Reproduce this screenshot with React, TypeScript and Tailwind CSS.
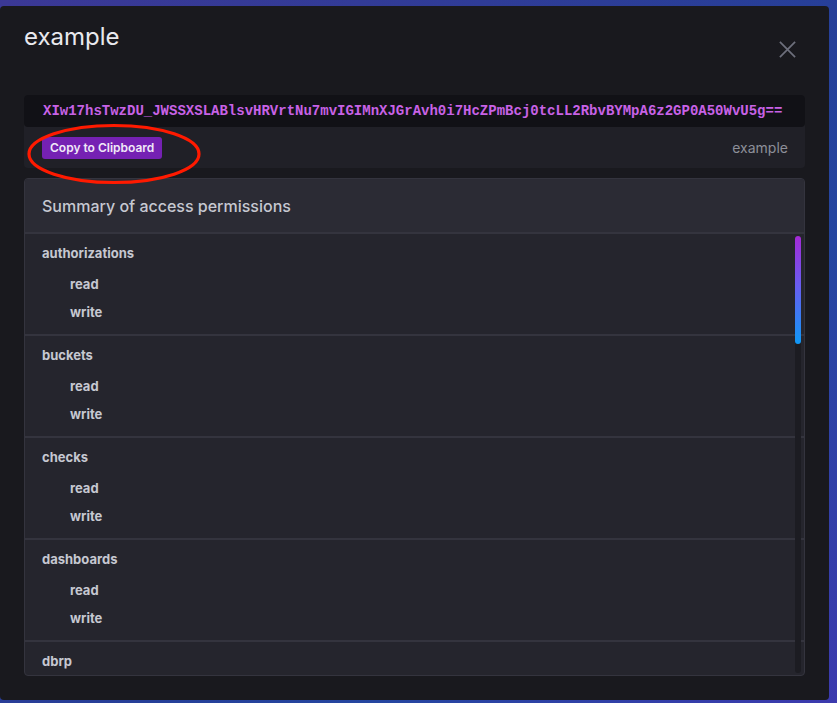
import React from "react";

const groups = ["authorizations", "buckets", "checks", "dashboards", "dbrp"];

export default function App() {
  return (
    <div className="relative h-[703px] w-[837px] overflow-hidden bg-[linear-gradient(135deg,#3b3896_0%,#263f98_55%,#2546a0_70%,#3c3aae_100%)] font-['Inter',sans-serif]">
      <div className="flex pt-[6px]">
        <div className="relative flex h-[694px] w-[829px] flex-col rounded-[4px] bg-[#19191e] px-6">
          <div className="flex h-[89px] items-start justify-between">
            <h1 className="mt-[15px] text-[24px] leading-[32px] font-normal text-[#e9e9ee]">example</h1>
            <button className="mt-[26px] mr-[1px] flex h-[34px] w-[34px] items-center justify-center text-[#6d6f7c]">
              <svg width="19" height="19" viewBox="0 0 20 20" fill="none" stroke="currentColor" strokeWidth="1.8">
                <path d="M2 2 L18 18 M18 2 L2 18" />
              </svg>
            </button>
          </div>

          <div className="rounded-[4px] bg-[#202027]">
            <div className="flex h-[32px] items-center rounded-[4px] bg-[#111116] px-[19px]">
              <span className="font-['Liberation_Mono',monospace] text-[14px] font-bold leading-none whitespace-nowrap text-[#c862e6]">
                XIw17hsTwzDU_JWSSXSLABlsvHRVrtNu7mvIGIMnXJGrAvh0i7HcZPmBcj0tcLL2RbvBYMpA6z2GP0A50WvU5g==
              </span>
            </div>
            <div className="flex h-[41px] items-center justify-between pr-[17px] pl-[18px]">
              <button className="h-[22px] rounded-[3px] bg-[#7521b3] px-[8px] text-[12px] leading-[22px] font-semibold text-[#f0e8f8]">
                Copy to Clipboard
              </button>
              <span className="text-[14px] text-[#8d8f99]">example</span>
            </div>
          </div>

          <div className="mt-[10px] flex h-[498px] flex-col overflow-hidden rounded-[4px] border border-[#34343e] bg-[#25252d]">
            <div className="flex h-[55px] shrink-0 items-center border-b-2 border-[#34343e] bg-[#2b2b34] px-[17px]">
              <span className="text-[16px] font-medium text-[#c6c8d1]">Summary of access permissions</span>
            </div>
            <div className="relative flex-1 overflow-hidden">
              {groups.map((g, i) => (
                <div key={g} className="border-b-2 border-[#34343e] px-[17px] pt-[9px] pb-[12px]">
                  <div className="h-[20px] text-[13px] leading-[20px] font-bold text-[#c6c8d1]">{g}</div>
                  {i < groups.length - 1 && (
                    <div className="mt-[11px] flex flex-col gap-[8px] pl-[28px]">
                      <div className="h-[20px] text-[13px] leading-[20px] font-bold text-[#c6c8d1]">read</div>
                      <div className="h-[20px] text-[13px] leading-[20px] font-bold text-[#c6c8d1]">write</div>
                    </div>
                  )}
                </div>
              ))}
              <div className="absolute top-[2px] right-[3px] bottom-[2px] w-[6px] rounded-[3px] bg-[#1c1c22]">
                <div className="h-[108px] w-[6px] rounded-[3px] bg-[linear-gradient(180deg,#a42ad6_0%,#6a5cf0_45%,#0f98f5_100%)]" />
              </div>
            </div>
          </div>

          <svg className="pointer-events-none absolute top-[116px] left-[26px]" width="176" height="64" viewBox="0 0 176 64">
            <ellipse cx="88" cy="32" rx="85" ry="28.5" fill="none" stroke="#ff1a00" strokeWidth="3.2" />
          </svg>
        </div>
      </div>
    </div>
  );
}
